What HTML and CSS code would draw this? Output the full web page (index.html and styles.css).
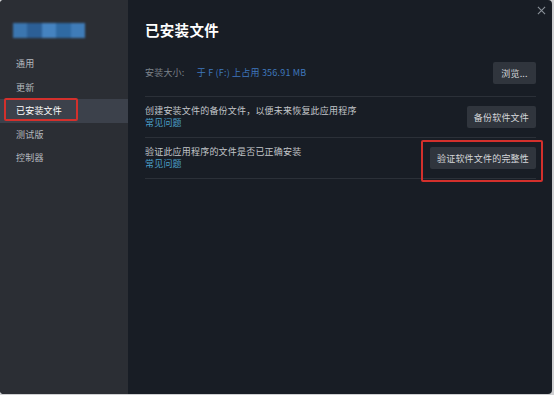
FILE: index.html
```html
<!DOCTYPE html>
<html lang="zh-CN">
<head>
    <meta charset="UTF-8">
    <meta name="viewport" content="width=device-width, initial-scale=1.0">
    <title>已安装文件</title>
    <link rel="stylesheet" href="styles.css">
</head>
<body>
    <div class="window">
        <div class="sidebar">
            <div class="game-logo">
                <span class="px px-a"></span><span class="px px-b"></span><span class="px px-c"></span><span class="px px-d"></span><span class="px px-e"></span>
            </div>
            <ul class="nav">
                <li class="nav-item">通用</li>
                <li class="nav-item">更新</li>
                <li class="nav-item active">已安装文件<span class="mark mark-nav"></span></li>
                <li class="nav-item">测试版</li>
                <li class="nav-item">控制器</li>
            </ul>
        </div>

        <div class="main">
            <button class="close" type="button" aria-label="关闭">
                <svg viewBox="0 0 10 10" width="9" height="9">
                    <path d="M1 1 L9 9 M9 1 L1 9" stroke="#8b929a" stroke-width="1.2" fill="none"/>
                </svg>
            </button>

            <h1>已安装文件</h1>

            <div class="row row-size">
                <div class="row-text">
                    <span class="label">安装大小:</span>
                    <span class="value">于 F (F:) 上占用 356.91 MB</span>
                </div>
                <button class="btn" type="button">浏览...</button>
            </div>

            <div class="row">
                <div class="row-text">
                    <p>创建安装文件的备份文件，以便未来恢复此应用程序</p>
                    <a class="faq" href="#">常见问题</a>
                </div>
                <button class="btn" type="button">备份软件文件</button>
            </div>

            <div class="row">
                <div class="row-text">
                    <p>验证此应用程序的文件是否已正确安装</p>
                    <a class="faq" href="#">常见问题</a>
                </div>
                <span class="btn-wrap">
                    <button class="btn" type="button">验证软件文件的完整性</button>
                    <span class="mark mark-btn"></span>
                </span>
            </div>
        </div>
    </div>
</body>
</html>
```

FILE: styles.css
```css
* {
    margin: 0;
    padding: 0;
    box-sizing: border-box;
}

body {
    font-family: "Noto Sans CJK SC", "Noto Sans", sans-serif;
    background: #cfd0d2;
    width: 554px;
    height: 395px;
    overflow: hidden;
}

.window {
    display: flex;
    width: 552px;
    height: 394px;
    border-radius: 4px;
    overflow: hidden;
    background: #181d25;
    position: relative;
}

/* barra lateral */
.sidebar {
    width: 128px;
    flex-shrink: 0;
    background: #2b2e34;
    padding-top: 23px;
}

.game-logo {
    display: flex;
    margin-left: 13px;
    width: 72px;
    height: 15px;
    margin-bottom: 14px;
    filter: blur(1.2px);
}

.px {
    flex: 1;
    height: 100%;
}

.px-a { background: #3b76b0; }
.px-b { background: #2c5f96; }
.px-c { background: #4583c0; }
.px-d { background: #2f6aa3; }
.px-e { background: #3f7cb8; }

.nav {
    list-style: none;
}

.nav-item {
    position: relative;
    height: 23.5px;
    line-height: 24px;
    padding-left: 16px;
    font-size: 9px;
    letter-spacing: 0.2px;
    color: #b6babf;
}

.nav-item.active {
    background: #3c414b;
    color: #ffffff;
}

/* marcações vermelhas */
.mark {
    position: absolute;
    border: 2px solid #d3302c;
    border-radius: 2px;
    pointer-events: none;
}

.mark-nav {
    left: 4px;
    top: -1px;
    width: 74px;
    height: 23px;
}

/* conteúdo principal */
.main {
    flex: 1;
    padding: 20px 16px 0 17px;
}

.close {
    position: absolute;
    top: 6px;
    right: 6px;
    background: none;
    border: none;
    width: 9px;
    height: 9px;
    display: flex;
}

h1 {
    color: #ffffff;
    font-size: 14.5px;
    font-weight: 700;
    line-height: 20px;
    letter-spacing: 0.3px;
    margin-bottom: 9px;
}

.row {
    display: flex;
    align-items: center;
    justify-content: space-between;
    padding: 8px 0;
    border-bottom: 1px solid #2b3038;
}

.row-size {
    padding: 13px 0 12px;
}

.row-text {
    font-size: 9px;
    letter-spacing: 0.2px;
    line-height: 12px;
    color: #c3c6ca;
}

.label {
    color: #7c828a;
    margin-right: 10px;
}

.value {
    color: #3f78bd;
}

.faq {
    color: #4b9fc8;
    text-decoration: none;
    display: block;
}

.btn {
    font-family: inherit;
    font-size: 9px;
    letter-spacing: 0.2px;
    color: #d6d8db;
    background: #30353d;
    border: none;
    border-radius: 2px;
    height: 22px;
    min-width: 43px;
    padding: 0 7px;
    cursor: pointer;
}

.btn-wrap {
    position: relative;
    display: flex;
}

.mark-btn {
    left: -9px;
    top: -7px;
    right: -7px;
    bottom: -13px;
}
```
